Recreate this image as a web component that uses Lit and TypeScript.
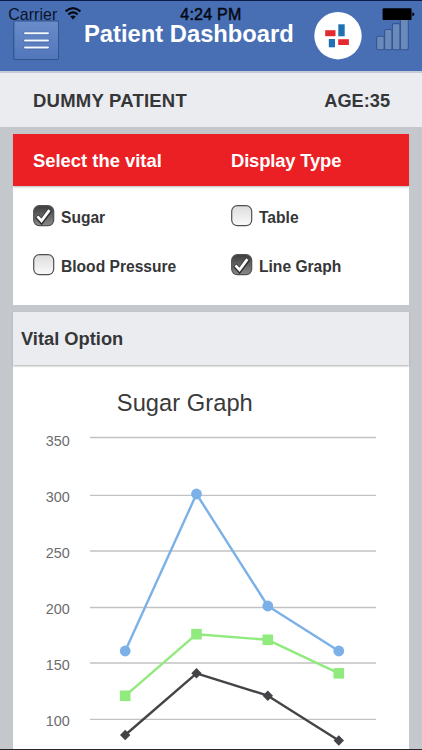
import { LitElement, html, svg, css } from "lit";
import { customElement, property } from "lit/decorators.js";

type Point = [number, number];

@customElement("vital-check")
class VitalCheck extends LitElement {
  @property() label = "";
  @property({ type: Boolean }) checked = false;

  static styles = css`
    :host { display: flex; align-items: center; height: 22px; color: #353638; font-weight: bold; font-size: 15.6px; }
    svg { display: block; flex: none; width: 22px; height: 22px; margin-right: 6px; }
    span { line-height: 18px; padding-top: 4px; white-space: nowrap; }
  `;

  render() {
    return html`
      <svg viewBox="0 0 22 22">
        <defs>
          <linearGradient id="off" x1="0" y1="0" x2="0" y2="1"><stop offset="0" stop-color="#dcdcdc"/><stop offset="1" stop-color="#fafafa"/></linearGradient>
          <linearGradient id="on" x1="0" y1="0" x2="0" y2="1"><stop offset="0" stop-color="#3c3c3c"/><stop offset="1" stop-color="#8a8a8a"/></linearGradient>
        </defs>
        <rect x="0.7" y="0.7" width="20" height="20" rx="5.6" fill="url(#${this.checked ? "on" : "off"})" stroke="#505050" stroke-width="1.2"/>
        ${this.checked
          ? svg`<path d="M3.8 11.2L8.5 16.4L17 5" fill="none" stroke="#2c2c2c" stroke-width="4.8"/>
                <path d="M4.4 11.4L8.5 15.8L16.4 5.2" fill="none" stroke="#fff" stroke-width="2.8"/>`
          : ""}
      </svg>
      <span>${this.label}</span>`;
  }
}

@customElement("vital-chart")
class VitalChart extends LitElement {
  private xs = [125.2, 196.5, 267.8, 338.8];
  private ticks: Point[] = [[350, 437.5], [300, 495.4], [250, 551], [200, 607.5], [150, 663], [100, 719.4]];
  private blue = [651, 494, 606, 651];
  private green = [695.8, 634.2, 639.8, 673.3];
  private dark = [735, 673.3, 695.7, 740.5];

  static styles = css`
    :host { display: block; }
    svg { display: block; width: 396px; height: 385px; }
    .title { font-size: 23.7px; fill: #3a3a3a; }
    .tick { font-size: 14.4px; fill: #6c6c6e; }
  `;

  private line(ys: number[], color: string) {
    return svg`<polyline points=${this.xs.map((x, i) => `${x},${ys[i]}`).join(" ")} fill="none" stroke=${color} stroke-width="2.4" stroke-linejoin="round"/>`;
  }

  render() {
    const at = (ys: number[]): Point[] => this.xs.map((x, i) => [x, ys[i]] as Point);
    return html`<svg viewBox="13 365 396 385">
      <text class="title" x="116.8" y="410.7" textLength="136">Sugar Graph</text>
      ${this.ticks.map(([v, y], i) => svg`
        <line x1="90" x2="376" y1=${y} y2=${y} stroke="#c2c2c2" stroke-width="1.3"/>
        <text class="tick" x="45.8" y=${445.7 + i * 56.1}>${v}</text>`)}
      ${this.line(this.blue, "#7cb1e8")}
      ${at(this.blue).map(([x, y]) => svg`<circle cx=${x} cy=${y} r="5.4" fill="#7cb1e8"/>`)}
      ${this.line(this.green, "#90ea7e")}
      ${at(this.green).map(([x, y]) => svg`<rect x=${x - 5.3} y=${y - 5.3} width="10.6" height="10.6" fill="#90ea7e"/>`)}
      ${this.line(this.dark, "#444448")}
      ${at(this.dark).map(([x, y]) => svg`<path d=${`M${x} ${y - 5.2}L${x + 5.2} ${y}L${x} ${y + 5.2}L${x - 5.2} ${y}Z`} fill="#444448"/>`)}
    </svg>`;
  }
}

@customElement("app-root")
class AppRoot extends LitElement {
  static styles = css`
    :host {
      display: block; position: relative; width: 422px; height: 750px; overflow: hidden; box-sizing: border-box;
      background: #c4c7cc; border-bottom: 1px solid #25262a;
      font-family: "Liberation Sans", Arial, sans-serif;
    }
    .header {
      height: 71px; box-sizing: border-box; background: #486fb4; border-top: 1px solid #0c1d4a;
      display: grid; grid-template-columns: 13px 46px 25px 1fr 48px 14px 34px 12px;
    }
    .menu { grid-column: 2; margin-top: 19px; width: 46px; height: 40px; display: block; }
    .title { grid-column: 4; margin: 22px 0 0; height: 24px; line-height: 22px; font-size: 23.75px; font-weight: bold; color: #fff; white-space: nowrap; }
    .logo { grid-column: 5; margin-top: 11px; width: 48px; height: 48px; display: block; }
    .bars { grid-column: 7; margin-top: 17px; width: 34px; height: 33px; display: block; }
    .status { position: absolute; left: 0; top: 0; width: 422px; height: 26px; display: block; }
    .carrier { font-size: 15.9px; fill: #0a1228; }
    .time { font-size: 16px; fill: #050914; stroke: #050914; stroke-width: .5px; }
    .patient {
      height: 56px; padding: 2px 32px 0 33px; box-sizing: border-box; background: #ebecf0; border-top: 2px solid #c6cbd9;
      display: flex; justify-content: space-between; align-items: center;
      font-weight: bold; font-size: 18.5px; color: #353638;
    }
    .name { letter-spacing: .22px; }
    .age { font-size: 18.2px; }
    .content { padding: 7px 13.5px 0 13px; display: flex; flex-direction: column; gap: 7px; }
    .panel { background: #fff; }
    .red {
      height: 52px; background: #ea2024; color: #fff; font-weight: bold; font-size: 18.4px; line-height: 53px;
      display: grid; grid-template-columns: 198px 1fr; padding-left: 20px; box-shadow: 0 1px 2px #bbb;
    }
    .display { letter-spacing: -.15px; }
    .checks { height: 119px; box-sizing: border-box; padding: 19px 0 0 20px; display: grid; grid-template-columns: 198px 1fr; grid-auto-rows: 22px; row-gap: 27px; }
    .option {
      height: 53px; box-sizing: border-box; padding-left: 8px; line-height: 54px; background: #ebecf0; color: #353638;
      font-size: 18.3px; font-weight: bold; box-shadow: 0 1px 2px #aaa;
    }
  `;

  render() {
    return html`
      <div class="header">
        <svg class="menu" viewBox="13 20 46 40">
          <defs><linearGradient id="mb" x1="0" y1="0" x2="0" y2="1"><stop offset="0" stop-color="#6a8cca"/><stop offset="1" stop-color="#5176ba"/></linearGradient></defs>
          <rect x="13.8" y="20.8" width="44.8" height="38.7" rx="1.5" fill="url(#mb)" stroke="#31558f" stroke-width="1.2"/>
          <path d="M25 33.5H48M25 40.7H48M25 47.8H48" stroke="#35599b" stroke-width="3.4" stroke-linecap="round" opacity=".5"/>
          <path d="M25 33.2H48M25 40.4H48M25 47.5H48" stroke="#f4f7fc" stroke-width="2" stroke-linecap="round"/>
        </svg>
        <h1 class="title">Patient Dashboard</h1>
        <svg class="logo" viewBox="313.5 12 48 48">
          <circle cx="337.5" cy="35.7" r="23.7" fill="#fff"/>
          <rect x="324.7" y="30.2" width="10.3" height="6" fill="#e42a31"/>
          <rect x="337.8" y="24.3" width="6.4" height="12" fill="#2070b4"/>
          <rect x="328.3" y="39" width="6.2" height="8.3" fill="#2070b4"/>
          <rect x="337.7" y="39.2" width="10.7" height="5.8" fill="#e42a31"/>
        </svg>
        <svg class="bars" viewBox="376 18 34 33">
          <g fill="#6b8abc" stroke="#34558f" stroke-width="1.1">
            <rect x="376.6" y="36.3" width="7.6" height="13.4" rx="1.5"/>
            <rect x="384.6" y="29.5" width="7.4" height="20.2" rx="1.5"/>
            <rect x="392.4" y="23.6" width="7.6" height="26.1" rx="1.5"/>
            <rect x="400.4" y="18.5" width="7.9" height="31.2" rx="1.5"/>
          </g>
        </svg>
      </div>
      <svg class="status" viewBox="0 0 422 26">
        <text class="carrier" x="8.2" y="20" textLength="49">Carrier</text>
        <g fill="none" stroke="#050914" stroke-width="2.1">
          <path d="M65.6 11.4Q73 5 80.4 11.4"/><path d="M68.3 14.5Q73 10.4 77.7 14.5"/>
        </g>
        <path d="M70.2 16.4Q73 14.4 75.8 16.4L73 19.4Z" fill="#050914"/>
        <text class="time" x="180.3" y="20" textLength="61">4:24 PM</text>
        <rect x="382.6" y="8.3" width="29" height="11.8" rx="1.2" fill="#000"/>
        <path d="M412.4 12.2Q414.3 12.6 414.3 14.2T412.4 16.2Z" fill="#000"/>
      </svg>
      <div class="patient"><span class="name">DUMMY PATIENT</span><span class="age">AGE:35</span></div>
      <div class="content">
        <section class="panel">
          <div class="red"><span>Select the vital</span><span class="display">Display Type</span></div>
          <div class="checks">
            <vital-check label="Sugar" checked></vital-check>
            <vital-check label="Table"></vital-check>
            <vital-check label="Blood Pressure"></vital-check>
            <vital-check label="Line Graph" checked></vital-check>
          </div>
        </section>
        <section class="panel">
          <div class="option">Vital Option</div>
          <vital-chart></vital-chart>
        </section>
      </div>`;
  }
}
